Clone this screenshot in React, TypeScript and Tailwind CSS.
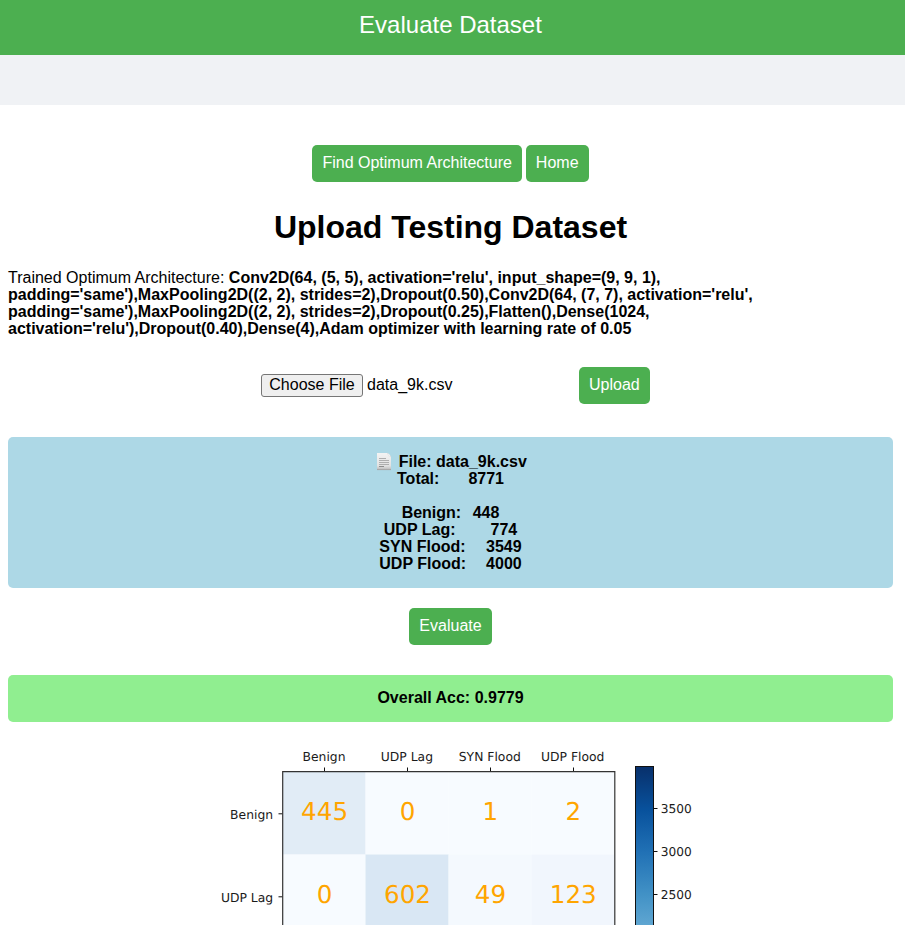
import type { ReactNode } from "react";

const counts = [
  { label: "Total:", gap: "ml-[29px]", value: "8771" },
  null,
  { label: "Benign:", gap: "ml-[11.5px]", value: "448" },
  { label: "UDP Lag:", gap: "ml-[35px]", value: "774" },
  { label: "SYN Flood:", gap: "ml-[20.5px]", value: "3549" },
  { label: "UDP Flood:", gap: "ml-[20px]", value: "4000" },
];

const columns = ["Benign", "UDP Lag", "SYN Flood", "UDP Flood"];

const rows = [
  { label: "Benign", cells: [{ n: 445, fill: "#e1ecf6" }, { n: 0, fill: "#f7fbff" }, { n: 1, fill: "#f7fbff" }, { n: 2, fill: "#f7fbff" }] },
  { label: "UDP Lag", cells: [{ n: 0, fill: "#f7fbff" }, { n: 602, fill: "#d9e7f4" }, { n: 49, fill: "#f4f9fe" }, { n: 123, fill: "#f1f6fd" }] },
];

function Button({ children }: { children: ReactNode }) {
  return <button className="h-[37px] rounded-[5px] bg-[#4caf50] px-2.5 pt-[9px] pb-[11px] text-base leading-[17px] text-white">{children}</button>;
}

function PageIcon() {
  return (
    <svg className="mr-[3.5px] ml-px h-[19px] w-5" viewBox="0 0 20 19">
      <defs>
        <linearGradient id="paper" x1="0" y1="0" x2="0" y2="1">
          <stop offset="0" stopColor="#f4f4f4" />
          <stop offset="0.75" stopColor="#e2e2e2" />
          <stop offset="1" stopColor="#b8b8b8" />
        </linearGradient>
      </defs>
      <path d="M2 1H12.5Q14 2 16 5V18H2Z" fill="url(#paper)" />
      <path d="M12.3 1Q13 4.6 16 5Q14.6 2.2 12.3 1Z" fill="#fff" stroke="#cfcfcf" strokeWidth="0.4" />
      <path d="M4 6.5H11M4 8.5H14M4 10.5H14M4 12.5H14" stroke="#a8a8a8" strokeWidth="0.9" />
      <path d="M4 14.5H9" stroke="#858585" strokeWidth="0.9" />
      <path d="M2 17.6H16" stroke="#a2a2a2" strokeWidth="0.8" />
    </svg>
  );
}

function ConfusionMatrix() {
  return (
    <svg className="mt-5 ml-[210px] block h-[183px] w-[500px] shrink-0 font-['DejaVu_Sans',sans-serif] [text-rendering:geometricPrecision]" viewBox="210 742 500 183">
      <defs>
        <linearGradient id="blues" gradientUnits="userSpaceOnUse" x1="0" y1="766.5" x2="0" y2="938">
          <stop offset="0" stopColor="#08306b" />
          <stop offset="0.25" stopColor="#08519c" />
          <stop offset="0.5" stopColor="#2171b5" />
          <stop offset="0.75" stopColor="#4292c6" />
          <stop offset="1" stopColor="#6baed6" />
        </linearGradient>
      </defs>
      {rows.map((row, r) => (
        <g key={r}>
          {row.cells.map((cell, c) => (
            <g key={c}>
              <rect x={282.5 + c * 83} y={771.5 + r * 83} width="83.2" height="83.2" fill={cell.fill} />
              <text x={324.6 + c * 82.9} y={820.2 + r * 83} fontSize="24.6" textAnchor="middle" fill="#ffa500">{cell.n}</text>
            </g>
          ))}
          <path d={`M278.5 ${813.8 + r * 83}H282.5`} stroke="#111" />
          <text x="273.1" y={818.9 + r * 83} fontSize="12.35" textAnchor="end" fill="#1a1a1a">{row.label}</text>
        </g>
      ))}
      {columns.map((label, c) => (
        <g key={label}>
          <path d={`M${324.5 + c * 83} 767.5V771.5`} stroke="#111" />
          <text x={324 + c * 82.9} y="760.8" fontSize="12.35" textAnchor="middle" fill="#1a1a1a">{label}</text>
        </g>
      ))}
      <path d="M282.7 930V771.7H614.8V930" fill="none" stroke="#333" strokeWidth="1.2" />
      <rect x="635.5" y="766.5" width="18" height="200" fill="url(#blues)" stroke="#111" />
      {[3500, 3000, 2500].map((n, i) => (
        <g key={n}>
          <path d={`M653.5 ${808.5 + i * 43}H657.5`} stroke="#111" />
          <text x="660.8" y={813.4 + i * 43} fontSize="12.2" fill="#1a1a1a">{n}</text>
        </g>
      ))}
    </svg>
  );
}

export default function App() {
  return (
    <div className="flex h-[925px] w-full flex-col overflow-hidden bg-white font-['Liberation_Sans',Arial,sans-serif] text-base leading-[17px] text-black">
      <header className="h-[55px] shrink-0 bg-[#4caf50] pt-[11px] pr-1 text-center text-2xl leading-[27px] text-white">Evaluate Dataset</header>
      <div className="h-[50px] shrink-0 bg-[#f0f2f5]" />
      <nav className="mt-10 mr-1 flex shrink-0 justify-center gap-1">
        <Button>Find Optimum Architecture</Button>
        <Button>Home</Button>
      </nav>
      <h1 className="mt-[27px] mr-1 shrink-0 text-center text-[32px] leading-[37px] font-bold">Upload Testing Dataset</h1>
      <p className="mt-[23px] ml-2 shrink-0">
        Trained Optimum Architecture:{" "}
        <b>
          Conv2D(64, (5, 5), activation='relu', input_shape=(9, 9, 1),
          <br />
          padding='same'),MaxPooling2D((2, 2), strides=2),Dropout(0.50),Conv2D(64, (7, 7), activation='relu',
          <br />
          padding='same'),MaxPooling2D((2, 2), strides=2),Dropout(0.25),Flatten(),Dense(1024,
          <br />
          activation='relu'),Dropout(0.40),Dense(4),Adam optimizer with learning rate of 0.05
        </b>
      </p>
      <div className="mt-[30px] ml-[261px] flex shrink-0 items-center">
        <div className="flex w-[318px] items-center gap-1">
          <button className="h-[23px] w-[102px] rounded-[3px] border border-[#767676] bg-[#efefef] pb-0.5 leading-[17px]">Choose File</button>
          <span className="pb-0.5">data_9k.csv</span>
        </div>
        <Button>Upload</Button>
      </div>
      <section className="mt-[33px] mr-3 ml-2 h-[151px] shrink-0 rounded-[5px] bg-[#add8e6] pt-3.5 font-bold">
        <div className="flex h-[19px] items-end justify-center">
          <div className="-mb-px"><PageIcon /></div>
          <span>File: data_9k.csv</span>
        </div>
        {counts.map((row, i) => (
          <div key={i} className="flex h-[17px] justify-center">
            {row && <span>{row.label}</span>}
            {row && <span className={row.gap}>{row.value}</span>}
          </div>
        ))}
      </section>
      <div className="mt-5 mr-1 flex shrink-0 justify-center">
        <Button>Evaluate</Button>
      </div>
      <section className="mt-[30px] mr-3 ml-2 h-[47px] shrink-0 rounded-[5px] bg-[#90ee90] pt-3.5 text-center font-bold">Overall Acc: 0.9779</section>
      <ConfusionMatrix />
    </div>
  );
}
